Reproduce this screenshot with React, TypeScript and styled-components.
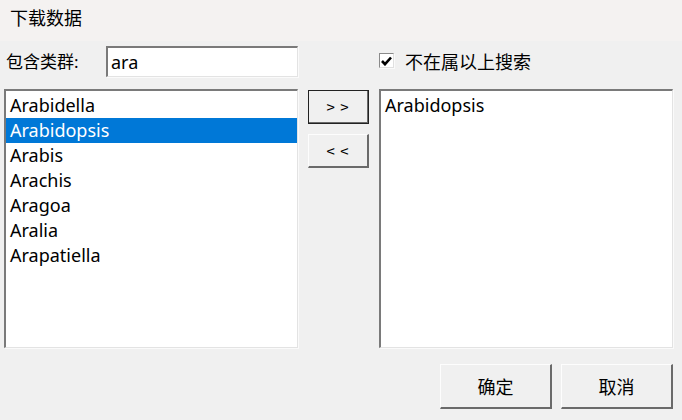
import React from 'react';
import styled, { createGlobalStyle } from 'styled-components';

const GlobalStyle = createGlobalStyle`
  html, body {
    margin: 0;
    padding: 0;
    background: #f0f0f0;
  }
  body {
    font-family: "Noto Sans", "Noto Sans CJK SC", sans-serif;
    color: #000;
  }
`;

const genera = ['Arabidella', 'Arabidopsis', 'Arabis', 'Arachis', 'Aragoa', 'Aralia', 'Arapatiella'];
const chosen = ['Arabidopsis'];

const CheckMark = () => (
  <svg width="11" height="10" viewBox="0 0 11 10">
    <path d="M1 5 L4 8.2 L10 1.5" fill="none" stroke="#000" strokeWidth="2.6" />
  </svg>
);

const App = () => (
  <Window>
    <GlobalStyle />
    <TitleBar>下载数据</TitleBar>
    <Body>
      <FilterRow>
        <Label>包含类群:</Label>
        <TextInput>ara</TextInput>
      </FilterRow>
      <span />
      <CheckRow>
        <CheckBox>
          <CheckMark />
        </CheckBox>
        <CheckLabel>不在属以上搜索</CheckLabel>
      </CheckRow>

      <ListBox>
        {genera.map((name) => (
          <Item key={name} selected={name === 'Arabidopsis'}>{name}</Item>
        ))}
      </ListBox>
      <MoveButtons>
        <SmallButton primary>&gt; &gt;</SmallButton>
        <SmallButton>&lt; &lt;</SmallButton>
      </MoveButtons>
      <ListBox>
        {chosen.map((name) => (
          <Item key={name}>{name}</Item>
        ))}
      </ListBox>

      <Footer>
        <DialogButton>确定</DialogButton>
        <DialogButton>取消</DialogButton>
      </Footer>
    </Body>
  </Window>
);

export default App;

const Window = styled.div`
  width: 682px;
  height: 420px;
  display: flex;
  flex-direction: column;
  background: #f0f0f0;
  overflow: hidden;
`;

const TitleBar = styled.div`
  height: 41px;
  flex-shrink: 0;
  display: flex;
  align-items: center;
  padding-left: 10px;
  padding-bottom: 8px;
  box-sizing: border-box;
  background: #f4f2f1;
  font-size: 18px;
`;

const Body = styled.div`
  display: grid;
  grid-template-columns: 294px 61px 294px;
  grid-template-rows: 31px 259px auto;
  column-gap: 10px;
  row-gap: 12px;
  padding: 5px 0 0 4px;
`;

const FilterRow = styled.div`
  display: flex;
  align-items: center;
  justify-content: space-between;
  padding-left: 2px;
`;

const Label = styled.span`
  font-size: 17px;
  padding-bottom: 2px;
`;

const sunken = `
  box-sizing: border-box;
  background: #fff;
  border-style: solid;
  border-width: 2px 1px 1px 2px;
  border-color: #7a7a7a #e3e3e3 #e3e3e3 #7a7a7a;
  box-shadow: 1px 1px 0 #fafafa;
`;

const TextInput = styled.div`
  ${sunken}
  width: 192px;
  height: 31px;
  padding: 0 0 1px 3px;
  font-size: 18px;
  display: flex;
  align-items: center;
`;

const CheckRow = styled.div`
  display: flex;
  align-items: center;
  gap: 11px;
  padding-bottom: 2px;
`;

const CheckBox = styled.span`
  ${sunken}
  width: 15px;
  height: 15px;
  display: flex;
  align-items: center;
  justify-content: center;
  border-width: 1px;
  border-color: #8a8a8a #e0e0e0 #e0e0e0 #8a8a8a;
`;

const CheckLabel = styled.span`
  font-size: 18px;
`;

const ListBox = styled.div`
  ${sunken}
  height: 259px;
  padding-top: 2px;
  display: flex;
  flex-direction: column;
`;

const Item = styled.div<{ selected?: boolean }>`
  height: 25px;
  line-height: 25px;
  padding-left: 4px;
  font-size: 18px;
  background: ${(p) => (p.selected ? '#0078d7' : 'transparent')};
  color: ${(p) => (p.selected ? '#fff' : '#000')};
`;

const MoveButtons = styled.div`
  display: flex;
  flex-direction: column;
  gap: 10px;
  padding-top: 1px;
`;

const raised = `
  box-sizing: border-box;
  background: #f0f0f0;
  border-style: solid;
  border-width: 1px 2px 2px 1px;
  border-color: #fdfdfd #6a6a6a #6a6a6a #fdfdfd;
  font-family: "Noto Sans CJK SC", "Noto Sans", sans-serif;
  color: #000;
  display: flex;
  align-items: center;
  justify-content: center;
`;

const SmallButton = styled.div<{ primary?: boolean }>`
  ${raised}
  height: 34px;
  font-size: 15px;
  letter-spacing: 1px;
  ${(p) => (p.primary ? 'outline: 1px solid #222; outline-offset: -1px;' : '')}
`;

const Footer = styled.div`
  grid-column: 3;
  display: flex;
  justify-content: flex-end;
  gap: 9px;
  padding-top: 4px;
`;

const DialogButton = styled.div`
  ${raised}
  width: 112px;
  height: 45px;
  font-size: 18px;
`;
